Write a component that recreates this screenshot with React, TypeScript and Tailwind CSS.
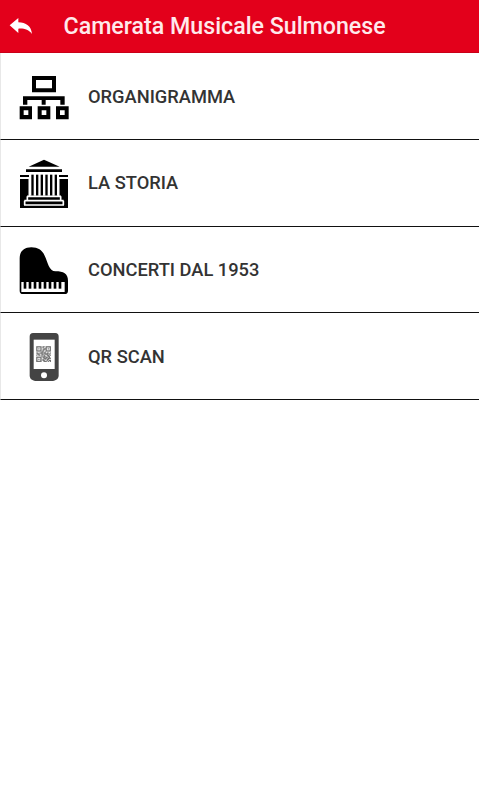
import type { ReactNode } from 'react';

type MenuItem = {
  label: string;
  icon: ReactNode;
  height: string;
  leading: string;
};

const PIANO_KEYS = [41, 56, 71, 86, 101, 116, 131, 146];
const COLUMNS = [64, 78, 92, 106, 120, 134];

const QR_ROWS = [
  '11111011011111',
  '10001010010001',
  '10101001110101',
  '10001011010001',
  '11111010011111',
  '00000110100000',
  '11011101101101',
  '01100110111010',
  '10110101001101',
  '00000101100110',
  '11111011011010',
  '10001001110111',
  '10101010101100',
  '10001011001011',
  '11111001110101',
];

function OrgChartIcon() {
  return (
    <svg className="h-[50px] w-[50px]" viewBox="27 15 150 150" fill="#000">
      <path fillRule="evenodd" d="M66 30h72v49H66zM78 42v25h48V42z" />
      <path d="M39 91h125v25h-13v-14h-44v14H95v-14H52v14H39z" />
      <path fillRule="evenodd" d="M29 121h37v39H29zM41 133v14h14v-14z" />
      <path fillRule="evenodd" d="M83 121h38v39H83zM95 133v14h14v-14z" />
      <path fillRule="evenodd" d="M138 121h38v39h-38zM150 133v14h14v-14z" />
    </svg>
  );
}

function TempleIcon() {
  return (
    <svg className="h-[50px] w-[50px]" viewBox="27 24 150 150">
      <path d="M102 29L149 50H56z" />
      <path d="M48 58h108v8H48zM30 75h27v6H30zM147 75h27v6h-27z" />
      <path d="M30 87h27v50h90V87h27v87H30z" />
      {COLUMNS.map((x) => (
        <rect key={x} x={x} y="74" width="7" height="64" />
      ))}
      <path
        fill="none"
        stroke="#fff"
        strokeWidth="5"
        d="M58 87v51M146 87v51M51 139h102M52 139v13M152 139v13M43 152h118M44 152v13M160 152v13M42 165h120"
      />
    </svg>
  );
}

function PianoIcon() {
  return (
    <svg className="h-[50px] w-[50px]" viewBox="27 21 150 150">
      <path
        fill="#000"
        d="M29 61C29 39 43 28 64 28C84 28 96 36 104 53C114 73 116 99 137 100C160 100 174 107 174 128V158Q174 168 164 168H39Q29 168 29 158z"
      />
      <path fill="#fff" d="M34 132h130v30H34z" />
      {PIANO_KEYS.map((x) => (
        <rect key={x} x={x} y="130" width="8" height="22" fill="#000" />
      ))}
    </svg>
  );
}

function PhoneIcon() {
  return (
    <svg className="h-[50px] w-[50px]" viewBox="27 21 150 150">
      <path
        fill="#444"
        d="M69 27H136Q146 27 146 38V154C146 167 135 171 120 172H85C69 171 59 167 59 154V38Q59 27 69 27z"
      />
      <path fill="#fff" d="M71 47h63v88H71z" />
      <circle cx="102" cy="154" r="9" fill="#fff" />
      <g fill="#333">
        {QR_ROWS.map((row, y) =>
          row
            .split('')
            .map((cell, x) =>
              cell === '1' ? <rect key={`${x}-${y}`} x={79 + x * 3.1} y={67 + y * 3.1} width="3.1" height="3.1" /> : null,
            ),
        )}
      </g>
    </svg>
  );
}

const MENU_ITEMS: MenuItem[] = [
  { label: 'ORGANIGRAMMA', icon: <OrgChartIcon />, height: 'h-[87px]', leading: 'leading-[51px]' },
  { label: 'LA STORIA', icon: <TempleIcon />, height: 'h-[87px]', leading: 'leading-[50px]' },
  { label: 'CONCERTI DAL 1953', icon: <PianoIcon />, height: 'h-[86px]', leading: 'leading-[49px]' },
  { label: 'QR SCAN', icon: <PhoneIcon />, height: 'h-[87px]', leading: 'leading-[51px]' },
];

export default function App() {
  return (
    <div className="min-h-screen w-full bg-white font-[Roboto,sans-serif]">
      <header className="flex h-[53px] items-center border-b border-[#c90018] bg-[#e3001b] pl-[9px]">
        <button aria-label="Indietro" className="w-[54.5px]">
          <svg className="h-[18px] w-6" viewBox="27 54 72 54" fill="#fff">
            <path d="M29 79L55 57V70C78 70 94 82 96 105C86 92 74 88 55 89V102z" />
          </svg>
        </button>
        <h1 className="text-[23.2px] leading-[30px] font-medium text-[#ffe9eb]">Camerata Musicale Sulmonese</h1>
      </header>
      <nav>
        {MENU_ITEMS.map((item) => (
          <button
            key={item.label}
            className={`flex w-full items-start border-b border-l border-b-[#111] border-l-[#e8e8e8] pt-[18px] pl-[18px] text-left ${item.height}`}
          >
            {item.icon}
            <span className={`ml-[19px] text-[18.3px] font-medium text-[#333] ${item.leading}`}>{item.label}</span>
          </button>
        ))}
      </nav>
    </div>
  );
}
